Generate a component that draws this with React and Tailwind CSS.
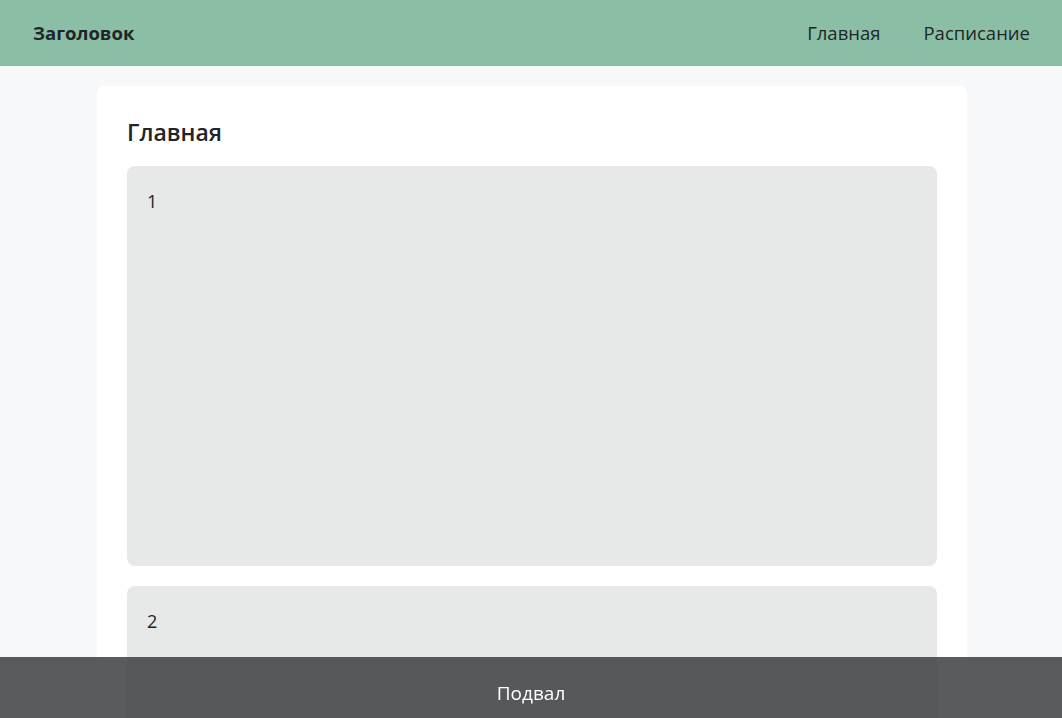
import React from 'react';

const blocks = ['1', '2'];

const App = () => {
  return (
    <div
      className="min-h-screen bg-[#f7f8f9] text-[#212529]"
      style={{ fontFamily: '"Open Sans", "Noto Sans", sans-serif' }}
    >
      <header className="h-[66px] bg-[#8abfa6] flex items-center justify-between pl-[33px] pr-[32px]">
        <div className="text-[18.5px] font-bold">Заголовок</div>
        <nav className="flex items-center gap-[43px] text-[18.5px]">
          <a href="#" className="text-[#212529]">Главная</a>
          <a href="#" className="text-[#212529]">Расписание</a>
        </nav>
      </header>

      <main className="pt-[20px] pb-[80px]">
        <div className="ml-[97px] w-[870px] bg-white rounded-lg px-[30px] pt-[30px] pb-[30px]">
          <h1 className="text-[23px] font-semibold leading-[32px] mb-[18px]">Главная</h1>
          <div className="flex flex-col gap-[20px]">
            {blocks.map((b) => (
              <div
                key={b}
                className="h-[400px] bg-[#e7e9e8] rounded-lg p-[20px] text-[18px] leading-[30px]"
              >
                {b}
              </div>
            ))}
          </div>
        </div>
      </main>

      <footer className="fixed bottom-0 left-0 right-0 h-[61px] bg-[#3b3f43]/85 flex items-center justify-center pt-[11px] text-white text-[19px]">
        Подвал
      </footer>
    </div>
  );
};

export default App;
